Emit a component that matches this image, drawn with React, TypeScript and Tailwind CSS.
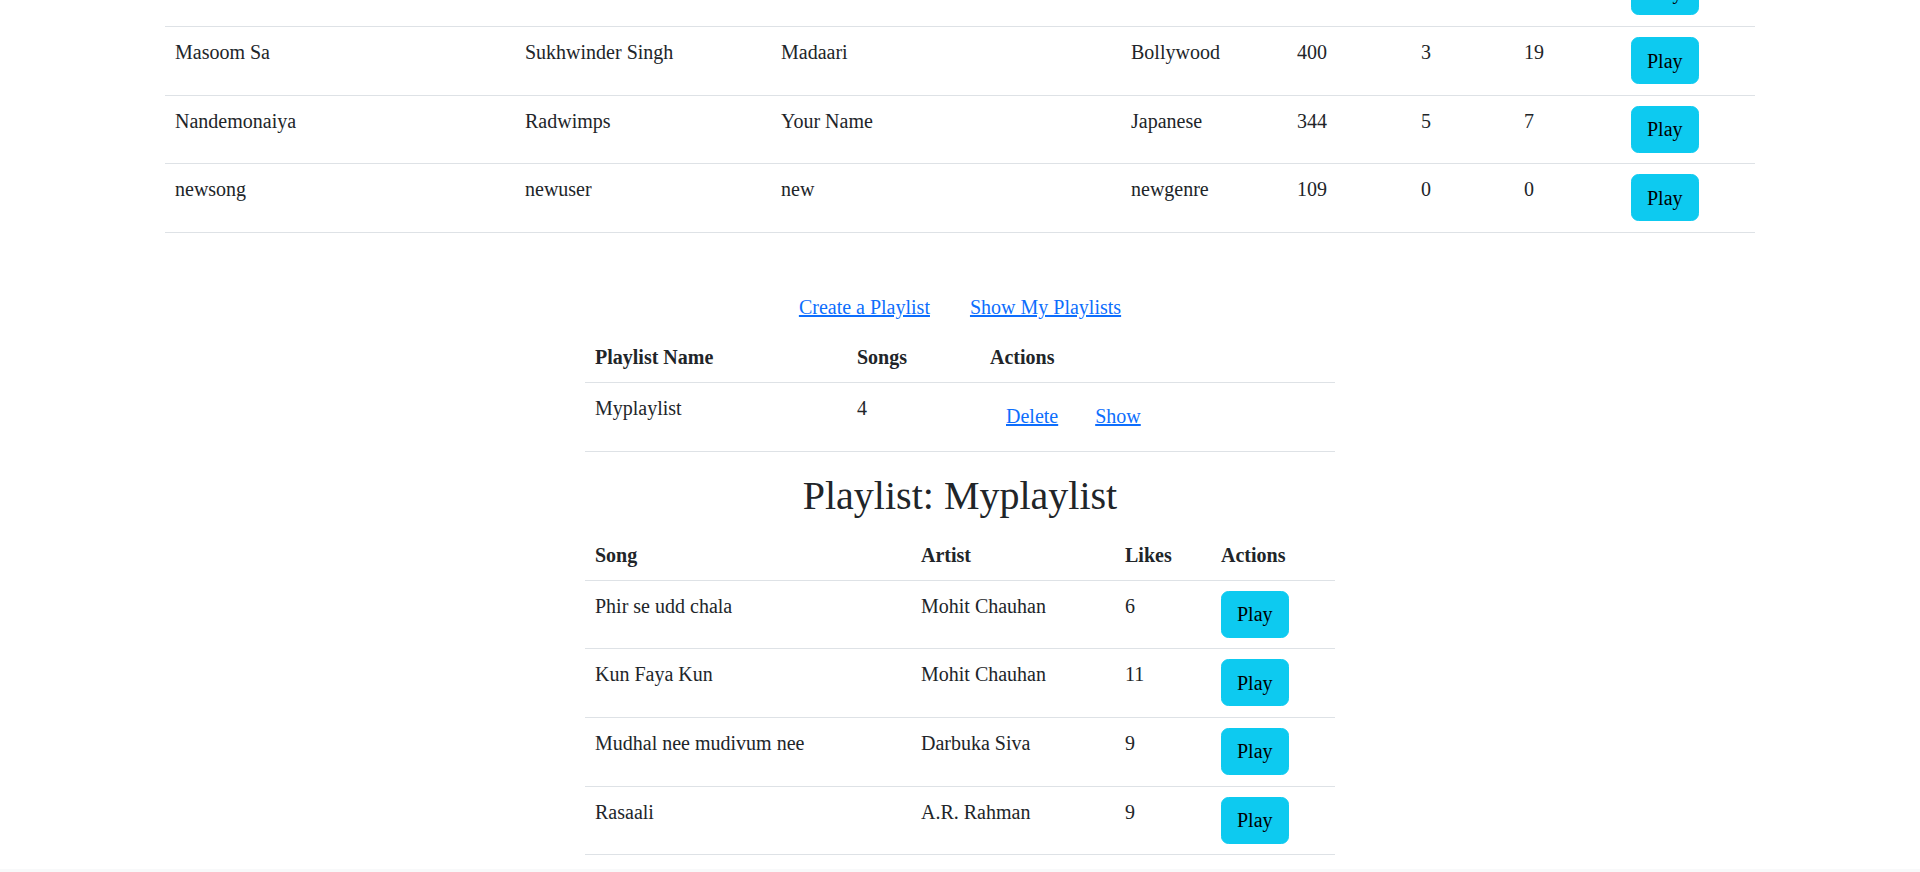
const songs = [
  { title: '', artist: '', album: '', genre: '', duration: '', likes: '', plays: '' },
  { title: 'Masoom Sa', artist: 'Sukhwinder Singh', album: 'Madaari', genre: 'Bollywood', duration: 400, likes: 3, plays: 19 },
  { title: 'Nandemonaiya', artist: 'Radwimps', album: 'Your Name', genre: 'Japanese', duration: 344, likes: 5, plays: 7 },
  { title: 'newsong', artist: 'newuser', album: 'new', genre: 'newgenre', duration: 109, likes: 0, plays: 0 },
];

const playlistSongs = [
  { title: 'Phir se udd chala', artist: 'Mohit Chauhan', likes: 6 },
  { title: 'Kun Faya Kun', artist: 'Mohit Chauhan', likes: 11 },
  { title: 'Mudhal nee mudivum nee', artist: 'Darbuka Siva', likes: 9 },
  { title: 'Rasaali', artist: 'A.R. Rahman', likes: 9 },
];

function PlayButton() {
  return (
    <button
      type="button"
      className="inline-block rounded-[7.5px] border border-[#0dcaf0] bg-[#0dcaf0] px-[15px] py-[7.5px] text-[20px] leading-[30px] text-black"
    >
      Play
    </button>
  );
}

function LinkButton({ children }: { children: React.ReactNode }) {
  return (
    <button
      type="button"
      className="inline-block border border-transparent px-[15px] py-[7.5px] text-[20px] leading-[30px] text-[#0d6efd] underline"
    >
      {children}
    </button>
  );
}

// rows holding a button come out 68.67px tall in the original
const td = 'px-[10px] pt-[10px] pb-[10.67px] align-top';
const th = 'p-[10px] text-left font-bold align-bottom';

export default function App() {
  return (
    <div className="min-h-screen overflow-hidden bg-white font-['Liberation_Serif',serif] text-[20px] leading-[30px] text-[#212529]">
      {/* page is scrolled: first row sits above the fold */}
      <table className="mx-[165px] -mt-[41.67px] w-[1590px] table-fixed">
        <colgroup>
          <col className="w-[350px]" />
          <col className="w-[256px]" />
          <col className="w-[350px]" />
          <col className="w-[166px]" />
          <col className="w-[124px]" />
          <col className="w-[103px]" />
          <col className="w-[107px]" />
          <col className="w-[134px]" />
        </colgroup>
        <tbody>
          {songs.map((s, i) => (
            <tr key={i} className="border-b border-[#dee2e6]">
              <td className={td}>{s.title}</td>
              <td className={td}>{s.artist}</td>
              <td className={td}>{s.album}</td>
              <td className={td}>{s.genre}</td>
              <td className={td}>{s.duration}</td>
              <td className={td}>{s.likes}</td>
              <td className={td}>{s.plays}</td>
              <td className={td}>
                <PlayButton />
              </td>
            </tr>
          ))}
        </tbody>
      </table>

      <nav className="mt-[49px] flex justify-center">
        <a href="#" className="px-[20px] py-[10px] text-[#0d6efd] underline">
          Create a Playlist
        </a>
        <a href="#" className="px-[20px] py-[10px] text-[#0d6efd] underline">
          Show My Playlists
        </a>
      </nav>

      <table className="mx-auto mb-[20px] w-[750px] table-fixed">
        <colgroup>
          <col className="w-[262px]" />
          <col className="w-[133px]" />
          <col className="w-[355px]" />
        </colgroup>
        <thead>
          <tr className="border-b border-[#dee2e6]">
            <th className={th}>Playlist Name</th>
            <th className={th}>Songs</th>
            <th className={th}>Actions</th>
          </tr>
        </thead>
        <tbody>
          <tr className="border-b border-[#dee2e6]">
            <td className={td}>Myplaylist</td>
            <td className={td}>4</td>
            <td className={td}>
              <LinkButton>Delete</LinkButton> <LinkButton>Show</LinkButton>
            </td>
          </tr>
        </tbody>
      </table>

      <h2 className="mb-[10px] text-center text-[40px] leading-[48px] font-medium">
        Playlist: Myplaylist
      </h2>

      <table className="mx-auto w-[750px] table-fixed">
        <colgroup>
          <col className="w-[326px]" />
          <col className="w-[204px]" />
          <col className="w-[96px]" />
          <col className="w-[124px]" />
        </colgroup>
        <thead>
          <tr className="border-b border-[#dee2e6]">
            <th className={th}>Song</th>
            <th className={th}>Artist</th>
            <th className={th}>Likes</th>
            <th className={th}>Actions</th>
          </tr>
        </thead>
        <tbody>
          {playlistSongs.map((s) => (
            <tr key={s.title} className="border-b border-[#dee2e6]">
              <td className={td}>{s.title}</td>
              <td className={td}>{s.artist}</td>
              <td className={td}>{s.likes}</td>
              <td className={td}>
                <PlayButton />
              </td>
            </tr>
          ))}
        </tbody>
      </table>

      <footer className="mt-[14px] h-[40px] bg-[#f8f9fa]" />
    </div>
  );
}
